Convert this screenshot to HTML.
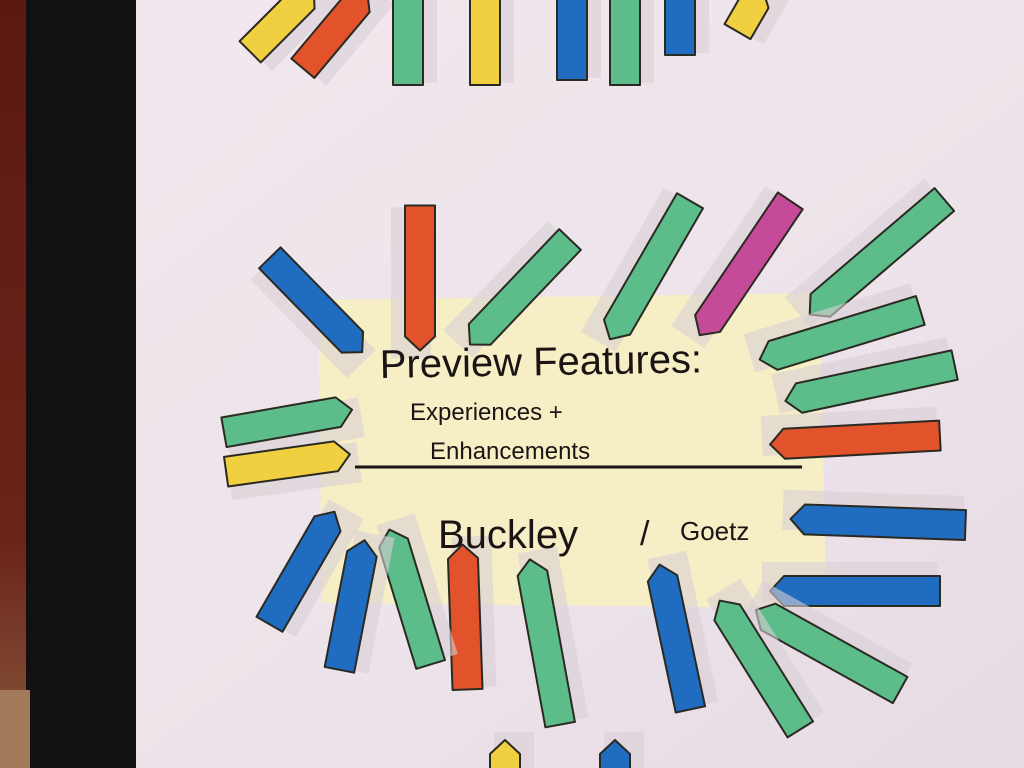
<!DOCTYPE html>
<html><head><meta charset="utf-8"><style>
html,body{margin:0;padding:0;width:1024px;height:768px;overflow:hidden;background:#efe6ec}
svg{display:block}
text{font-family:"Liberation Sans",sans-serif;fill:#1a1414}
</style></head><body>
<svg width="1024" height="768" viewBox="0 0 1024 768">
<defs>
<linearGradient id="pap" x1="0" y1="0" x2="1" y2="1">
<stop offset="0" stop-color="#f1e9ef"/><stop offset="0.6" stop-color="#ede3ea"/><stop offset="1" stop-color="#e6dbe3"/>
</linearGradient>
<linearGradient id="left" x1="0" y1="0" x2="0" y2="1">
<stop offset="0" stop-color="#5a1a12"/><stop offset="0.7" stop-color="#6a2418"/><stop offset="1" stop-color="#8a5a40"/>
</linearGradient>
</defs>
<rect width="1024" height="768" fill="url(#pap)"/>
<rect x="0" y="0" width="28" height="768" fill="url(#left)"/>
<rect x="26" y="0" width="110" height="768" fill="#121010"/>
<rect x="0" y="690" width="30" height="78" fill="#a07a5a"/>
<!-- sticky note -->
<polygon points="318,300 820,293 826,608 322,603" fill="#f6efc6"/>
<g id="arrows"></g>
<line x1="355" y1="467" x2="802" y2="467" stroke="#1a1414" stroke-width="3"/>
<text x="380" y="378" font-size="40" transform="rotate(-1 380 378)">Preview Features:</text>
<text x="410" y="420" font-size="24">Experiences +</text>
<text x="430" y="459" font-size="24">Enhancements</text>
<text x="438" y="548" font-size="40">Buckley</text>
<text x="640" y="545" font-size="34">/</text>
<text x="680" y="540" font-size="26">Goetz</text>
</svg>
<script>
var A=[
[316,305,132,45.6,'#1f6cc0'],[420,278,145,90,'#e2522b'],[520,292,145,133.6,'#5cbd8b'],
[650,270,160,120,'#5cbd8b'],[745,268,162,124,'#c54a98'],[877,257,177,139.5,'#5cbd8b'],
[840,335,168,163,'#5cbd8b'],[870,383,173,168,'#5cbd8b'],[855,440,170,177,'#e2522b'],
[878,522,175,182,'#1f6cc0'],[855,591,170,180,'#1f6cc0'],[828,650,165,209,'#5cbd8b'],
[760,665,152,238,'#5cbd8b'],[675,637,148,258,'#1f6cc0'],[545,642,168,259.6,'#5cbd8b'],
[465,617,145,268,'#e2522b'],[410,597,141,253,'#5cbd8b'],[352,605,132,281,'#1f6cc0'],
[302,568,130,300,'#1f6cc0'],[288,421,130,-10,'#5cbd8b'],[288,463,125,-8,'#f0d040'],
[282,20,90,-45,'#f0d040'],[335,30,100,-50,'#e2522b'],[408,30,110,-90,'#5cbd8b'],
[485,30,110,-90,'#f0d040'],[572,25,110,-90,'#1f6cc0'],[625,30,110,-90,'#5cbd8b'],
[680,15,80,-90,'#1f6cc0'],[750,10,50,-60,'#f0d040'],
[505,760,40,-90,'#f0d040'],[615,760,40,-90,'#1f6cc0']
];
var g=document.getElementById('arrows'),ns='http://www.w3.org/2000/svg',h='';
A.forEach(function(a){
 var L=a[2]/2,w=15,t=14;
 var p=(-L)+','+(-w)+' '+(L-t)+','+(-w)+' '+L+',0 '+(L-t)+','+w+' '+(-L)+','+w;
 h+='<g transform="translate('+a[0]+','+a[1]+') rotate('+a[3]+')">'+
 '<rect x="'+(-L-4)+'" y="'+(-w-2)+'" width="'+(2*L+6)+'" height="'+(2*w+10)+'" fill="#d8cfd6" opacity="0.6" transform="translate(6,6)"/>'+
 '<polygon points="'+p+'" fill="'+a[4]+'" stroke="#2a2a22" stroke-width="2" stroke-linejoin="round"/></g>';
});
g.innerHTML=h;
</script>
</body></html>
